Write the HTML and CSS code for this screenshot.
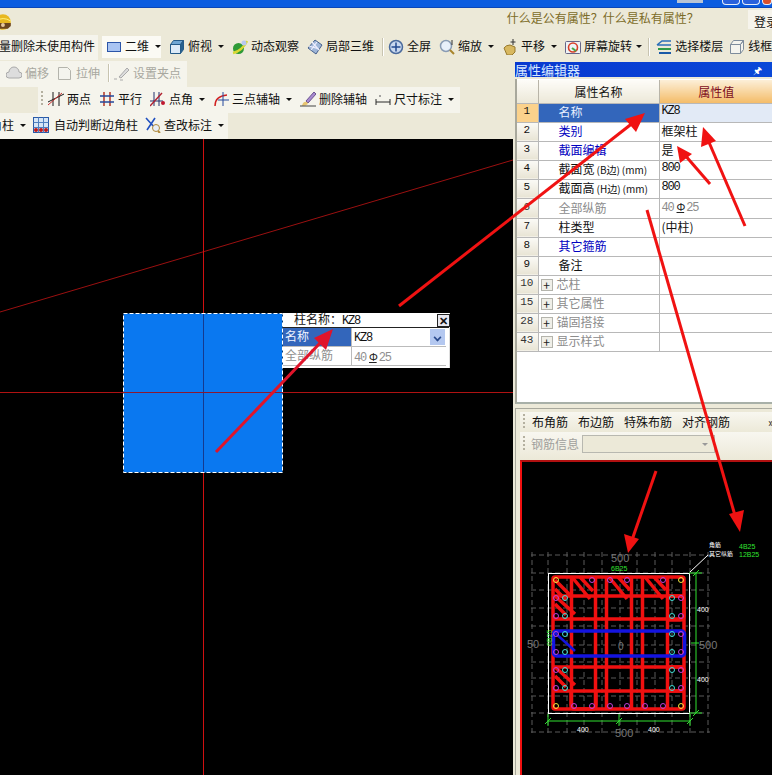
FILE: index.html
```html
<!DOCTYPE html>
<html lang="zh">
<head>
<meta charset="utf-8">
<title>属性编辑器</title>
<link rel="stylesheet" href="styles.css">
</head>
<body>
<div class="app">
  <header class="titlebar">
    <span class="winthumb"></span>
    <span class="winbtn"></span><span class="winbtn"></span><span class="winbtn close"></span>
  </header>
  <div class="menurow">
    <svg class="mascot" width="12" height="18" viewBox="0 0 12 18"><circle cx="3" cy="10" r="8" fill="#e8b820"/><path d="M-4 11h15v3l-3 3H0z" fill="#6a4420"/><circle cx="3" cy="13" r="2" fill="#e8c8a0"/><path d="M-4 9q7-5 15 0" stroke="#fff27a" fill="none"/></svg>
    <span class="question">什么是公有属性？什么是私有属性？</span>
    <span class="login">登录</span>
  </div>
  <nav class="toolrow main">
    <div class="tb clipped"><span class="cut">量删除未使用构件</span></div>
    <div class="tb view">
      <button class="tool active">
        <svg width="16" height="16" viewBox="0 0 16 16"><rect x="1.500" y="3.500" width="13" height="9" fill="#a9c4f2" stroke="#2c55a8"/></svg>二维<i class="caret"></i>
      </button>
      <button class="tool">
        <svg width="16" height="16" viewBox="0 0 16 16"><path d="M1.500 5.500h10v9h-10z" fill="#dceaf7" stroke="#245a88"/><path d="M1.500 5.500l3-4h10l-3 4z" fill="#6fa6d4" stroke="#245a88"/><path d="M11.500 5.500l3-4v9l-3 4z" fill="#27618f" stroke="#245a88"/></svg>俯视<i class="caret"></i>
      </button>
      <button class="tool">
        <svg width="16" height="16" viewBox="0 0 16 16"><circle cx="6.500" cy="9.500" r="5.500" fill="#2e9a36"/><path d="M1 14Q10 12 15 2" stroke="#d8d832" stroke-width="2.400" fill="none"/><circle cx="12" cy="4" r="2.500" fill="#b8c8f0"/></svg>动态观察
      </button>
      <button class="tool">
        <svg width="16" height="16" viewBox="0 0 16 16"><path d="M8 1l7 5-6 9-8-6z" fill="#9fb6d8" stroke="#46608c"/><path d="M5 3l7 8M10 3L4 11M2 7l10 3" stroke="#eef" stroke-width="1.200"/></svg>局部三维
      </button>
      <i class="sep"></i>
      <button class="tool">
        <svg width="16" height="16" viewBox="0 0 16 16"><circle cx="8" cy="8" r="6.500" fill="#c9d8ee" stroke="#4a6a9c" stroke-width="1.500"/><path d="M8 3.500v9M3.500 8h9" stroke="#234a90" stroke-width="1.500"/></svg>全屏
      </button>
      <button class="tool">
        <svg width="16" height="16" viewBox="0 0 16 16"><circle cx="7" cy="7" r="5.500" fill="#e8f0fa" stroke="#8a9cb4" stroke-width="1.500"/><path d="M11 11l4 4" stroke="#a8842c" stroke-width="2"/><path d="M13 1v5" stroke="#333"/></svg>缩放<i class="caret"></i>
      </button>
      <button class="tool">
        <svg width="16" height="16" viewBox="0 0 16 16"><path d="M2 9q2-3 6-3l5 2v5l-3 3H5z" fill="#d8b860" stroke="#96782c"/><path d="M11 0v6M8.500 3h5" stroke="#333"/></svg>平移<i class="caret"></i>
      </button>
      <button class="tool">
        <svg width="16" height="16" viewBox="0 0 16 16"><rect x=".5" y="2.500" width="15" height="12" rx="1" fill="#eef3f6" stroke="#668"/><circle cx="8" cy="8.500" r="4.500" fill="none" stroke="#d84028" stroke-width="1.600"/><path d="M7 9l4 3" stroke="#48a848" stroke-width="2"/></svg>屏幕旋转<i class="caret tight"></i>
      </button>
      <i class="sep alt"></i>
      <button class="tool">
        <svg width="16" height="16" viewBox="0 0 16 16"><path d="M1 6l5-4h9M1 6h14" stroke="#2b6fb8" stroke-width="1.600" fill="none"/><path d="M2 10h13" stroke="#2f9a48" stroke-width="2"/><path d="M3 14h12" stroke="#1a5aa8" stroke-width="2"/></svg>选择楼层
      </button>
      <button class="tool frame">
        <svg width="16" height="16" viewBox="0 0 16 16"><path d="M1.500 5.500h10v9h-10zM1.500 5.500l3-4h10l-3 4M11.500 5.500l3-4v9l-3 4" fill="#f4f4ee" stroke="#7d8c9c"/></svg>线框
      </button>
    </div>
  </nav>
  <div class="work">
    <section class="left">
      <div class="leftbars">
        <div class="tb disabled">
          <button class="tool"><svg width="16" height="16" viewBox="0 0 16 16"><path d="M3 13a3 3 0 0 1 0-6 5 5 0 0 1 10 0 3 3 0 0 1 0 6z" fill="#ddd" stroke="#aaa"/></svg>偏移</button>
          <button class="tool"><svg width="16" height="16" viewBox="0 0 16 16"><path d="M1.500 2.500h9l3 3v9h-12z" fill="#f4f4ee" stroke="#b4b4ac"/></svg>拉伸</button>
          <i class="sep"></i>
          <button class="tool"><svg width="16" height="16" viewBox="0 0 16 16"><path d="M5 12L13 3l2 2-8 8z" fill="#ddd" stroke="#aaa"/><path d="M0 14h3M6 15h3" stroke="#aaa"/></svg>设置夹点</button>
        </div>
        <div class="tb axis">
          <i class="grip"></i>
          <button class="tool"><svg width="16" height="16" viewBox="0 0 16 16"><path d="M5 1v14M11 1v14M0 11L16 3" stroke="#1a1a1a"/><path d="M0 14L14 2" stroke="#c83030"/></svg>两点</button>
          <button class="tool"><svg width="16" height="16" viewBox="0 0 16 16"><path d="M5 1v14M11 1v14" stroke="#b02818" stroke-width="1.400"/><path d="M1 5h14M1 11h14" stroke="#24489c" stroke-width="1.400"/></svg>平行</button>
          <button class="tool"><svg width="16" height="16" viewBox="0 0 16 16"><path d="M4 1v14M9 1v14M0 10h13" stroke="#23306c"/><path d="M0 15L12 2" stroke="#b02030" stroke-width="1.400"/><circle cx="13" cy="12" r="2" fill="#c01830"/></svg>点角<i class="caret"></i></button>
          <button class="tool"><svg width="16" height="16" viewBox="0 0 16 16"><path d="M2 15Q2 5 14 4" stroke="#d02020" stroke-width="1.500" fill="none"/><path d="M10 1v14M5 9h11" stroke="#24489c"/></svg>三点辅轴<i class="caret"></i></button>
          <button class="tool"><svg width="16" height="16" viewBox="0 0 16 16"><path d="M6 10l8-9 2 2-8 9z" fill="#a88ad0" stroke="#6a5290"/><path d="M2 15q1-5 5-4l1 2q-2 2-6 2z" fill="#e8c470"/><path d="M0 15h16" stroke="#444"/></svg>删除辅轴</button>
          <button class="tool"><svg width="16" height="16" viewBox="0 0 16 16"><path d="M1 8v6M15 8v6M1 11h14" stroke="#2a2a2a"/><circle cx="5" cy="5" r="1" fill="#888"/></svg>尺寸标注<i class="caret"></i></button>
        </div>
        <div class="tb last">
          <span class="cut2">角柱</span><i class="caret lead"></i>
          <button class="tool"><svg width="16" height="16" viewBox="0 0 16 16"><rect x=".5" y=".5" width="15" height="15" fill="#d6e6f7" stroke="#2a5aa8"/><path d="M.5 5.500h15M.5 10.500h15M5.500.5v15M10.500.5v15" stroke="#5080c0"/><circle cx="3" cy="13" r="2" fill="#c01818"/><circle cx="8" cy="13" r="2" fill="#c01818"/><circle cx="13" cy="13" r="2" fill="#c01818"/></svg><span class="wide">自动判断边角柱</span></button>
          <button class="tool"><svg width="16" height="16" viewBox="0 0 16 16"><path d="M1 1l9 10M10 1L2 13" stroke="#2050c0" stroke-width="1.600"/><circle cx="11" cy="11" r="3.500" fill="#e8eef6" stroke="#b08838"/><path d="M13 14l2 2" stroke="#b08838" stroke-width="2"/></svg>查改标注<i class="caret"></i></button>
        </div>
      </div>
      <div class="canvas">
        <svg class="drawing" viewBox="0 139 513 636">
          <path d="M0 312L513 160" stroke="#9a1010" fill="none"/>
          <rect x="123.500" y="313.500" width="159" height="159" fill="#0a78f0" stroke="#fff" stroke-dasharray="4 2"/>
          <path d="M203.500 139V313" stroke="#d01010" fill="none"/>
          <path d="M203.500 473V775" stroke="#d01010" fill="none"/>
          <path d="M0 392.500H124M283 392.500H513" stroke="#b01212" fill="none"/>
          <path d="M203.500 314V472" stroke="#143a90" fill="none"/>
          <path d="M124 392.500H283" stroke="#8c1830" fill="none"/>
        </svg>
        <div class="popup">
          <div class="popup-head"><span>柱名称：<span class="latin">KZ8</span></span><span class="popup-x">✕</span></div>
          <div class="popup-row"><span class="popup-key on">名称</span><span class="popup-val latin">KZ8<i class="combo"></i></span></div>
          <div class="popup-row"><span class="popup-key dim">全部纵筋</span><span class="popup-val latin dim">40<b class="bar">Φ</b>25</span></div>
        </div>
      </div>
    </section>
    <aside class="right">
      <div class="panel-title"><span>属性编辑器</span><span class="pin">🖈</span></div>
      <div class="grid-wrap">
        <table class="props">
          <thead><tr><th class="num"></th><th>属性名称</th><th class="val-head">属性值</th></tr></thead>
          <tbody>
            <tr class="sel"><td class="num">1</td><td class="name">名称</td><td class="latin">KZ8</td></tr>
            <tr><td class="num">2</td><td class="name link">类别</td><td>框架柱</td></tr>
            <tr><td class="num">3</td><td class="name link">截面编辑</td><td>是</td></tr>
            <tr><td class="num">4</td><td class="name">截面宽<span class="unit">(B边)</span><span class="unit">(mm)</span></td><td class="latin">800</td></tr>
            <tr><td class="num">5</td><td class="name">截面高<span class="unit">(H边)</span><span class="unit">(mm)</span></td><td class="latin">800</td></tr>
            <tr class="muted"><td class="num">6</td><td class="name">全部纵筋</td><td class="latin">40<b class="bar">Φ</b>25</td></tr>
            <tr><td class="num">7</td><td class="name">柱类型</td><td>(中柱)</td></tr>
            <tr><td class="num">8</td><td class="name link">其它箍筋</td><td></td></tr>
            <tr><td class="num">9</td><td class="name">备注</td><td></td></tr>
            <tr class="muted"><td class="num">10</td><td class="name"><i class="plus">+</i>芯柱</td><td></td></tr>
            <tr class="muted"><td class="num">15</td><td class="name"><i class="plus">+</i>其它属性</td><td></td></tr>
            <tr class="muted"><td class="num">28</td><td class="name"><i class="plus">+</i>锚固搭接</td><td></td></tr>
            <tr class="muted"><td class="num">43</td><td class="name"><i class="plus">+</i>显示样式</td><td></td></tr>
          </tbody>
        </table>
      </div>
      <div class="rebar-panel">
        <div class="rebar-bar">
          <i class="grip"></i><span>布角筋</span><span>布边筋</span><span>特殊布筋</span><span>对齐钢筋</span><span class="more">»</span>
        </div>
        <div class="rebar-bar info">
          <i class="grip"></i><span class="lbl">钢筋信息</span><span class="select"><i class="caret"></i></span>
        </div>
        <div class="rebar-canvas">
          <svg class="drawing" viewBox="522 462 250 313">
            <g stroke="#5a5a5a" stroke-dasharray="5 3" fill="none">
              <path d="M531 555H710M531 573H710M531 590H710M531 608H710M531 626H710M531 645H710M531 662H710M531 678H710M531 696H710M531 713H710M531 732H710"/>
              <path d="M532 552V735M548 552V735M567 552V735M584 552V735M602 552V735M620 552V735M637 552V735M655 552V735M672 552V735M690 552V735M708 552V735"/>
            </g>
            <g stroke="#f01010" stroke-width="3.500" fill="none">
              <rect x="553" y="577" width="131" height="132" rx="2"/>
              <path d="M571.500 577V709M595.500 577V709M606.500 577V709M631.500 577V709M642.500 577V709M667.500 577V709"/>
              <path d="M553 596H684M553 619H684M553 667H684M553 691H684"/>
              <path d="M555 580L572 597M555 589L566 600M572 577L590 599M580 577L593 591M609 577L627 599M618 577L630 590M645 577L663 599M654 577L666 590M555 596L575 614M555 604L566 615M555 667L575 685M555 676L566 687"/>
              <path d="M668 596h12q4 0 4 4v16q0 4-4 4h-12M668 667h12q4 0 4 4v16q0 4-4 4h-12M571 691v14q0 4 4 4h17q4 0 4-4v-14"/>
            </g>
            <path d="M553 631L575 651" stroke="#1414e0" stroke-width="2.500"/>
            <rect x="553.500" y="631" width="131" height="25" rx="3" fill="none" stroke="#1414e0" stroke-width="3.500"/>
            <g fill="none" stroke-width="1">
              <g stroke="#f0e840"><circle cx="556" cy="580" r="2.500"/><circle cx="681" cy="580" r="2.500"/><circle cx="556" cy="706" r="2.500"/><circle cx="681" cy="706" r="2.500"/></g>
              <g stroke="#c040d8"><circle cx="592" cy="580" r="2.500"/><circle cx="610" cy="580" r="2.500"/><circle cx="627" cy="580" r="2.500"/><circle cx="663" cy="580" r="2.500"/><circle cx="574" cy="706" r="2.500"/><circle cx="592" cy="706" r="2.500"/><circle cx="610" cy="706" r="2.500"/><circle cx="627" cy="706" r="2.500"/><circle cx="645" cy="706" r="2.500"/><circle cx="663" cy="706" r="2.500"/><circle cx="556" cy="598" r="2.500"/><circle cx="556" cy="616" r="2.500"/><circle cx="556" cy="634" r="2.500"/><circle cx="556" cy="652" r="2.500"/><circle cx="556" cy="670" r="2.500"/><circle cx="556" cy="688" r="2.500"/><circle cx="681" cy="598" r="2.500"/><circle cx="681" cy="616" r="2.500"/><circle cx="681" cy="634" r="2.500"/><circle cx="681" cy="652" r="2.500"/><circle cx="681" cy="670" r="2.500"/><circle cx="681" cy="688" r="2.500"/></g>
              <g stroke="#40e0d8"><circle cx="565" cy="598" r="2.500"/><circle cx="565" cy="616" r="2.500"/><circle cx="565" cy="634" r="2.500"/><circle cx="565" cy="652" r="2.500"/><circle cx="565" cy="670" r="2.500"/><circle cx="565" cy="688" r="2.500"/><circle cx="672" cy="598" r="2.500"/><circle cx="672" cy="616" r="2.500"/><circle cx="672" cy="634" r="2.500"/><circle cx="672" cy="652" r="2.500"/><circle cx="672" cy="670" r="2.500"/><circle cx="672" cy="688" r="2.500"/></g>
            </g>
            <rect x="548.500" y="573.500" width="141" height="140" fill="none" stroke="#fff"/>
            <path d="M690 572L708 555" stroke="#fff"/>
            <g stroke="#30e030" fill="none">
              <path d="M696 573V713M689 573h13M689 713h13M548 721H690M548 714v12M619 714v12M690 714v12M691 643h8"/>
              <path d="M545 724l6-6M616 724l6-6M687 724l6-6M693 576l6-6M693 716l6-6"/>
            </g>
            <g font-family="Liberation Sans, sans-serif">
              <text x="611" y="562" font-size="11" fill="#777">500</text>
              <text x="611" y="571" font-size="7" fill="#30e030">6B25</text>
              <text x="527" y="648" font-size="11" fill="#777">50</text>
              <text x="540" y="650" font-size="7" fill="#30e030" transform="rotate(-90 544 642)">6B25</text>
              <text x="618" y="650" font-size="10" fill="#777">0</text>
              <text x="699" y="649" font-size="11" fill="#777">500</text>
              <text x="697" y="612" font-size="7" fill="#fff">400</text>
              <text x="697" y="682" font-size="7" fill="#fff">400</text>
              <text x="577" y="732" font-size="7" fill="#fff">400</text>
              <text x="648" y="732" font-size="7" fill="#fff">400</text>
              <text x="615" y="737" font-size="11" fill="#777">500</text>
              <text x="739" y="549" font-size="7" fill="#30e030">4B25</text>
              <text x="739" y="557" font-size="7" fill="#30e030">12B25</text>
            </g>
            <g font-family="Noto Sans CJK SC, sans-serif" font-size="6" fill="#fff">
              <text x="709" y="547">角筋</text>
              <text x="709" y="556">其它纵筋</text>
            </g>
          </svg>
        </div>
      </div>
    </aside>
  </div>
  <svg class="arrows" viewBox="0 0 772 775">
    <g stroke="#f01212" stroke-width="3" fill="#f01212">
      <path d="M399 306L634 122"/><path d="M645 113L625 119 636 132z" stroke="none"/>
      <path d="M745 226L708 140"/><path d="M703 127L701 147 716 141z" stroke="none"/>
      <path d="M710 184L684 154"/><path d="M677 146L680 163 692 154z" stroke="none"/>
      <path d="M647 210L736 519"/><path d="M740 532L729 514 744 510z" stroke="none"/>
      <path d="M656 471L632 540"/><path d="M628 553L624 534 639 539z" stroke="none"/>
    </g>
    <g stroke="#e0142a" stroke-width="3" fill="#e0142a">
      <path d="M216 452L322 341"/><path d="M333 329L314 338 326 350z" stroke="none"/>
    </g>
  </svg>
</div>
</body>
</html>
```
FILE: styles.css
```css
* { box-sizing: border-box; }
html, body { margin: 0; padding: 0; }
body { background: #ece9d8; font: 12px/1.2 "Noto Sans CJK SC", "Liberation Sans", sans-serif; color: #111; }
.app { position: relative; width: 772px; height: 775px; overflow: hidden; display: flex; flex-direction: column; background: #ece9d8; }
button { all: unset; box-sizing: border-box; }
i { font-style: normal; }

.titlebar { height: 8px; flex: none; display: flex; justify-content: flex-end; gap: 2px; background: #0a5ce0; border-bottom: 1px solid #0a46b8; overflow: hidden; }
.winthumb { width: 26px; height: 3px; margin-right: 17px; background: #b8c4d4; }
.winbtn { width: 18px; height: 5px; border: 1px solid #e8eef8; border-top: 0; border-radius: 0 0 4px 4px; background: #2a62dc; }
.winbtn.close { background: #d8502c; width: 10px; }

.menurow { height: 27px; flex: none; display: flex; align-items: flex-start; }
.mascot { margin-top: 4px; }
.question { margin: 2px 0 0 495px; width: 246px; color: #7c6c28; font-size: 12px; line-height: 15px; }
.login { background: #f6f4ec; width: 24px; height: 19px; padding: 5px 0 0 6px; margin-top: 2px; white-space: nowrap; overflow: visible; }

.toolrow { height: 25px; flex: none; display: flex; gap: 4px; }
.tb { display: flex; align-items: center; gap: 8px; background: #f5f4ec; height: 25px; padding-bottom: 2px; }
.clipped { width: 98px; overflow: hidden; }
.cut { margin-left: -1px; white-space: nowrap; }
.view { flex: 1; padding-left: 4px; min-width: 0; white-space: nowrap; background: #ece9d8; }
.tool { display: inline-flex; align-items: center; gap: 3px; white-space: nowrap; height: 22px; flex: none; }
.tool.active { background: #fbfaf4; margin-left: -4px; padding-left: 4px; }
.tool.frame { margin-left: -2px; }
.caret { display: inline-block; width: 0; height: 0; margin-left: 3px; border: 3px solid transparent; border-top: 3px solid #111; border-bottom: 0; flex: none; }
.caret.tight { margin-left: 1px; }
.sep { height: 18px; background: #c8c4b0; border-right: 1px solid #fff; flex: none; width: 2px; margin-right: -4px; }
.sep.alt { margin: 0 -2px; }

.work { flex: 1; display: flex; min-height: 0; }
.left { width: 514px; flex: none; display: flex; flex-direction: column; }
.leftbars { height: 79px; flex: none; display: flex; flex-direction: column; }
.leftbars .tb { height: 26px; }
.disabled { width: 187px; margin-top: 1px; padding-left: 6px; color: #a8a8a0; }
.axis { width: 422px; margin-left: 38px; padding-left: 3px; }
.axis .grip { margin-right: -3px; }
.last { width: 228px; gap: 0; overflow: hidden; }
.last .tool { margin-left: 7px; }
.caret.lead { margin-left: 6px; }
.wide { margin-left: 2px; }
.cut2 { margin-left: -10px; white-space: nowrap; }
.grip { width: 2px; height: 16px; flex: none; background: repeating-linear-gradient(#b4b0a0 0 2px, transparent 2px 4px); }

.canvas { position: relative; flex: 1; background: #000; margin-right: 1px; }
.drawing { display: block; width: 100%; height: 100%; }
.popup { position: absolute; left: 283px; top: 174px; width: 167px; height: 55px; background: #fff; border-right: 1px solid #ddd; font-size: 12px; }
.popup-head { height: 15px; display: flex; justify-content: space-between; align-items: center; padding-left: 11px; border-bottom: 1px solid #222; line-height: 14px; }
.popup-x { width: 13px; height: 13px; margin-right: -1px; border: 1px solid #222; background: #e8e8f0; font-size: 11px; font-weight: 700; line-height: 11px; text-align: center; }
.popup-row { height: 19px; display: flex; border-bottom: 1px solid #bbb; margin-right: 3px; }
.popup-key { width: 69px; padding: 1px 2px; border-right: 1px solid #bbb; }
.popup-key.on { background: #3366bb; color: #f0f4ff; }
.popup-val { flex: 1; position: relative; padding: 3px 2px; }
.dim { color: #909090; }
.combo { position: absolute; right: 1px; top: 1px; width: 15px; height: 16px; background: #b4c8f0; }
.combo::after { content: ""; position: absolute; left: 4px; top: 5px; width: 5px; height: 5px; border: solid #2a4a8c; border-width: 0 2px 2px 0; transform: rotate(45deg) scale(.8); }
.latin { font-family: "Liberation Mono", monospace; font-size: 12px; letter-spacing: -1.2px; }
.bar { font-weight: 400; color: #222; margin: 0 2px 0 3px; text-decoration: underline; font-family: "Noto Sans CJK SC", sans-serif; font-size: 11px; }

.right { flex: 1; min-width: 0; display: flex; flex-direction: column; padding-top: 2px; padding-left: 1px; }
.panel-title { height: 15px; flex: none; display: flex; justify-content: space-between; align-items: center; background: linear-gradient(90deg, #0838d0, #0a48d8); color: #d8e8ff; font-size: 13px; line-height: 15px; padding-right: 10px; }
.pin { font-size: 10px; color: #fff; }
.grid-wrap { height: 325px; flex: none; margin-top: 2px; background: #fff; border-left: 2px solid #a8a89c; border-bottom: 2px solid #a8b0a8; padding-top: 1px; overflow: hidden; }
.props { border-collapse: collapse; table-layout: fixed; width: 258px; margin-left: -1px; }
.props th { height: 23px; padding: 0; font-weight: 400; line-height: 15px; background: linear-gradient(#fdfcf8, #ece8d8); border-right: 1px solid #b8b4a8; }
.props th:first-child { width: 22px; }
.props th:nth-child(2) { width: 121px; }
.props .val-head { background: linear-gradient(#fcefd8, #f4bc68); color: #7c0c20; }
.props td { height: 19px; padding: 0 0 2px 2px; border: 1px solid #b8b8b8; border-left: 0; white-space: nowrap; overflow: hidden; line-height: 15px; }
.props td.num { padding: 0 0 2px; text-align: center; background: linear-gradient(#fbfaf6, #e8e4d4); font-family: "Liberation Mono", monospace; font-size: 11px; }
.props td.name { padding-left: 20px; }
.unit { font-size: 10px; margin-left: 2px; }
.props .link { color: #0000c0; }
.props .muted td { color: #8c8c8c; }
.props .muted td.num { color: #333; }
.props .sel td.num { background: #fbd28c; }
.props .sel td.name { background: #3366bb; color: #e8f0ff; }
.props .sel td:last-child { background: #e2eaf6; }
.plus { display: inline-block; width: 12px; height: 12px; margin: 0 4px 0 -18px; border: 1px solid #b4b4ac; background: #f0efe8; color: #222; text-align: center; line-height: 10px; vertical-align: -1px; }

.rebar-panel { flex: 1; min-height: 0; display: flex; flex-direction: column; margin-top: 4px; border-left: 1px solid #a8a89c; border-top: 1px solid #a8a89c; padding: 3px 0 0 4px; background: #ece9d8; }
.rebar-bar { height: 20px; flex: none; display: flex; align-items: center; gap: 10px; padding-left: 3px; background: linear-gradient(#f8f7f0, #ece9d8); white-space: nowrap; }
.rebar-bar .grip { margin-right: -3px; }
.more { margin-left: 28px; font-size: 12px; }
.rebar-bar.info { height: 28px; gap: 3px; padding-bottom: 4px; color: #a0a09c; }
.rebar-bar.info .grip { margin-right: 3px; }
.select { width: 133px; height: 18px; border: 1px solid #b8b8b0; display: flex; align-items: center; justify-content: flex-end; padding-right: 6px; background: #ece9d8; }
.select .caret { border-top-color: #999; }
.rebar-canvas { flex: 1; min-height: 0; background: #000; border-left: 2px solid #f01010; border-top: 2px solid #b01010; }

.arrows { position: absolute; left: 0; top: 0; width: 772px; height: 775px; pointer-events: none; }
```
